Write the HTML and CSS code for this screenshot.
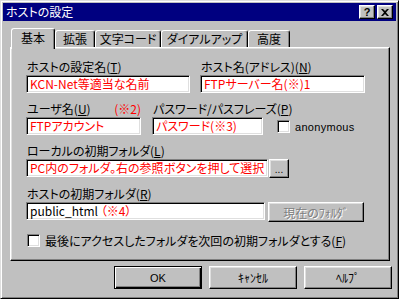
FILE: index.html
```html
<!DOCTYPE html>
<html lang="ja">
<head>
    <meta charset="UTF-8">
    <title>ホストの設定</title>
    <link rel="stylesheet" href="styles.css">
</head>
<body>
    <div class="window">
        <div class="titlebar">
            <span class="title">ホストの設定</span>
            <div class="title-buttons">
                <span class="tbtn help-q">?</span>
                <span class="tbtn">
                    <svg width="8" height="7" viewBox="0 0 8 7"><path d="M0 0h2l2 2 2-2h2l-3 3.5 3 3.5h-2l-2-2-2 2h-2l3-3.5z" fill="#000"/></svg>
                </span>
            </div>
        </div>

        <div class="tabs">
            <div class="tab selected" style="width:44px">基本</div>
            <div class="tab" style="width:40px">拡張</div>
            <div class="tab" style="width:66px">文字コード</div>
            <div class="tab" style="width:87px">ダイアルアップ</div>
            <div class="tab" style="width:42px">高度</div>
        </div>

        <div class="panel">
            <div class="row">
                <div class="group w164">
                    <div class="label">ホストの設定名(<u>T</u>)</div>
                    <div class="field red">KCN-Net等適当な名前</div>
                </div>
                <div class="group w165 gap10">
                    <div class="label">ホスト名(アドレス)(<u>N</u>)</div>
                    <div class="field red">FTPサーバー名(※)1</div>
                </div>
            </div>

            <div class="row">
                <div class="group w115">
                    <div class="label split">ユーザ名(<u>U</u>)<span class="note">(※2)</span></div>
                    <div class="field red">FTPアカウント</div>
                </div>
                <div class="group w111 gap11">
                    <div class="label">パスワード/パスフレーズ(<u>P</u>)</div>
                    <div class="field red">パスワード(※3)</div>
                </div>
                <div class="anon">
                    <span class="check"></span>
                    <span class="anon-text">anonymous</span>
                </div>
            </div>

            <div class="row">
                <div class="group">
                    <div class="label">ローカルの初期フォルダ(<u>L</u>)</div>
                    <div class="inline">
                        <div class="field red w242">PC内のフォルダ。右の参照ボタンを押して選択</div>
                        <div class="btn browse">...</div>
                    </div>
                </div>
            </div>

            <div class="row">
                <div class="group">
                    <div class="label">ホストの初期フォルダ(<u>R</u>)</div>
                    <div class="inline">
                        <div class="field w239">public_html <span class="red">（※4）</span></div>
                        <div class="btn current disabled">現在のﾌｫﾙﾀﾞ</div>
                    </div>
                </div>
            </div>

            <div class="last-row">
                <span class="check"></span>
                <span>最後にアクセスしたフォルダを次回の初期フォルダとする(<u>F</u>)</span>
            </div>
        </div>

        <div class="buttons">
            <div class="btn big default latin">OK</div>
            <div class="btn big">ｷｬﾝｾﾙ</div>
            <div class="btn big">ﾍﾙﾌﾟ</div>
        </div>
    </div>
</body>
</html>
```

FILE: styles.css
```css
* {
    box-sizing: border-box;
}

body {
    margin: 0;
    background-color: #c0c0c0;
    font-family: "Noto Sans CJK JP", sans-serif;
    font-size: 12px;
    font-feature-settings: "palt";
    color: #000;
}

u {
    text-decoration: underline;
    text-underline-offset: 1px;
}

.window {
    width: 399px;
    height: 299px;
    border: 1px solid;
    border-color: #dfdfdf #000 #000 #dfdfdf;
    box-shadow: inset 1px 1px #fff, inset -1px -1px #808080;
    padding: 2px;
    background-color: #c0c0c0;
}

.titlebar {
    height: 18px;
    background-color: #000080;
    color: #fff;
    display: flex;
    align-items: center;
    justify-content: space-between;
    padding: 0 3px 0 3px;
}

.title {
    line-height: 18px;
}

.title-buttons {
    display: flex;
    gap: 2px;
}

.tbtn {
    width: 16px;
    height: 14px;
    background-color: #c0c0c0;
    border: 1px solid;
    border-color: #fff #000 #000 #fff;
    box-shadow: inset -1px -1px #808080, inset 1px 1px #dfdfdf;
    display: flex;
    align-items: center;
    justify-content: center;
    color: #000;
}

.help-q {
    font-family: "Liberation Sans", sans-serif;
    font-weight: bold;
    font-size: 11px;
    line-height: 12px;
}

.tabs {
    display: flex;
    align-items: flex-end;
    height: 19px;
    margin: 7px 0 0 8px;
    position: relative;
    z-index: 1;
}

.tab {
    height: 17px;
    text-align: center;
    line-height: 15px;
    border-top: 1px solid #fff;
    border-left: 1px solid #fff;
    border-right: 1px solid #000;
    border-radius: 3px 3px 0 0;
    box-shadow: inset -1px 0 #808080;
    background-color: #c0c0c0;
}

.tab.selected {
    height: 21px;
    margin-bottom: -2px;
    line-height: 18px;
}

.panel {
    width: 380px;
    height: 214px;
    margin-left: 7px;
    border: 1px solid;
    border-color: #fff #000 #000 #fff;
    box-shadow: inset -1px -1px #808080, inset 1px 1px #dfdfdf;
    padding: 12px 0 0 15px;
}

.row {
    display: flex;
    align-items: flex-end;
    margin-bottom: 9px;
}

.group {
    display: flex;
    flex-direction: column;
}

.w164 { width: 164px; }
.w165 { width: 165px; }
.w115 { width: 115px; }
.w111 { width: 111px; }
.w242 { width: 242px; }
.w239 { width: 239px; }
.gap10 { margin-left: 10px; }
.gap11 { margin-left: 11px; }

.label {
    height: 15px;
    line-height: 14px;
    padding-left: 1px;
    white-space: nowrap;
}

.label.split {
    display: flex;
}

.note {
    color: #ff0000;
    margin-left: auto;
    margin-right: 0;
}

.field {
    height: 18px;
    line-height: 16px;
    background-color: #fff;
    border: 1px solid;
    border-color: #808080 #fff #fff #808080;
    box-shadow: inset 1px 1px #000, inset -1px -1px #dfdfdf;
    padding: 0 3px;
    white-space: nowrap;
    overflow: hidden;
}

.red {
    color: #ff0000;
}

.anon {
    display: flex;
    align-items: center;
    margin-left: 14px;
    margin-bottom: 2px;
}

.check {
    display: inline-block;
    width: 13px;
    height: 13px;
    background-color: #fff;
    border: 1px solid;
    border-color: #808080 #fff #fff #808080;
    box-shadow: inset 1px 1px #000, inset -1px -1px #dfdfdf;
}

.anon-text {
    font-family: "Liberation Sans", sans-serif;
    font-size: 11px;
    margin-left: 5px;
    letter-spacing: 0.3px;
}

.inline {
    display: flex;
    align-items: flex-start;
}

.btn {
    background-color: #c0c0c0;
    border: 1px solid;
    border-color: #fff #000 #000 #fff;
    box-shadow: inset -1px -1px #808080, inset 1px 1px #dfdfdf;
    display: flex;
    align-items: center;
    justify-content: center;
}

.browse {
    width: 20px;
    height: 19px;
    margin-left: 1px;
    font-family: "Liberation Sans", sans-serif;
    font-size: 10px;
    padding-top: 2px;
}

.current {
    width: 96px;
    height: 20px;
    margin-left: 3px;
}

.disabled {
    color: #808080;
    text-shadow: 1px 1px #fff;
}

.last-row {
    display: flex;
    align-items: center;
    gap: 5px;
    margin-top: 10px;
    padding-left: 1px;
}

.buttons {
    display: flex;
    justify-content: flex-end;
    gap: 7px;
    margin-top: 5px;
    padding-right: 4px;
}

.big {
    width: 88px;
    height: 23px;
}

.latin {
    font-family: "Liberation Sans", sans-serif;
    font-size: 11px;
}

.default {
    border: 1px solid #000;
    box-shadow: inset 1px 1px #fff, inset -1px -1px #000, inset -2px -2px #808080;
}
```
